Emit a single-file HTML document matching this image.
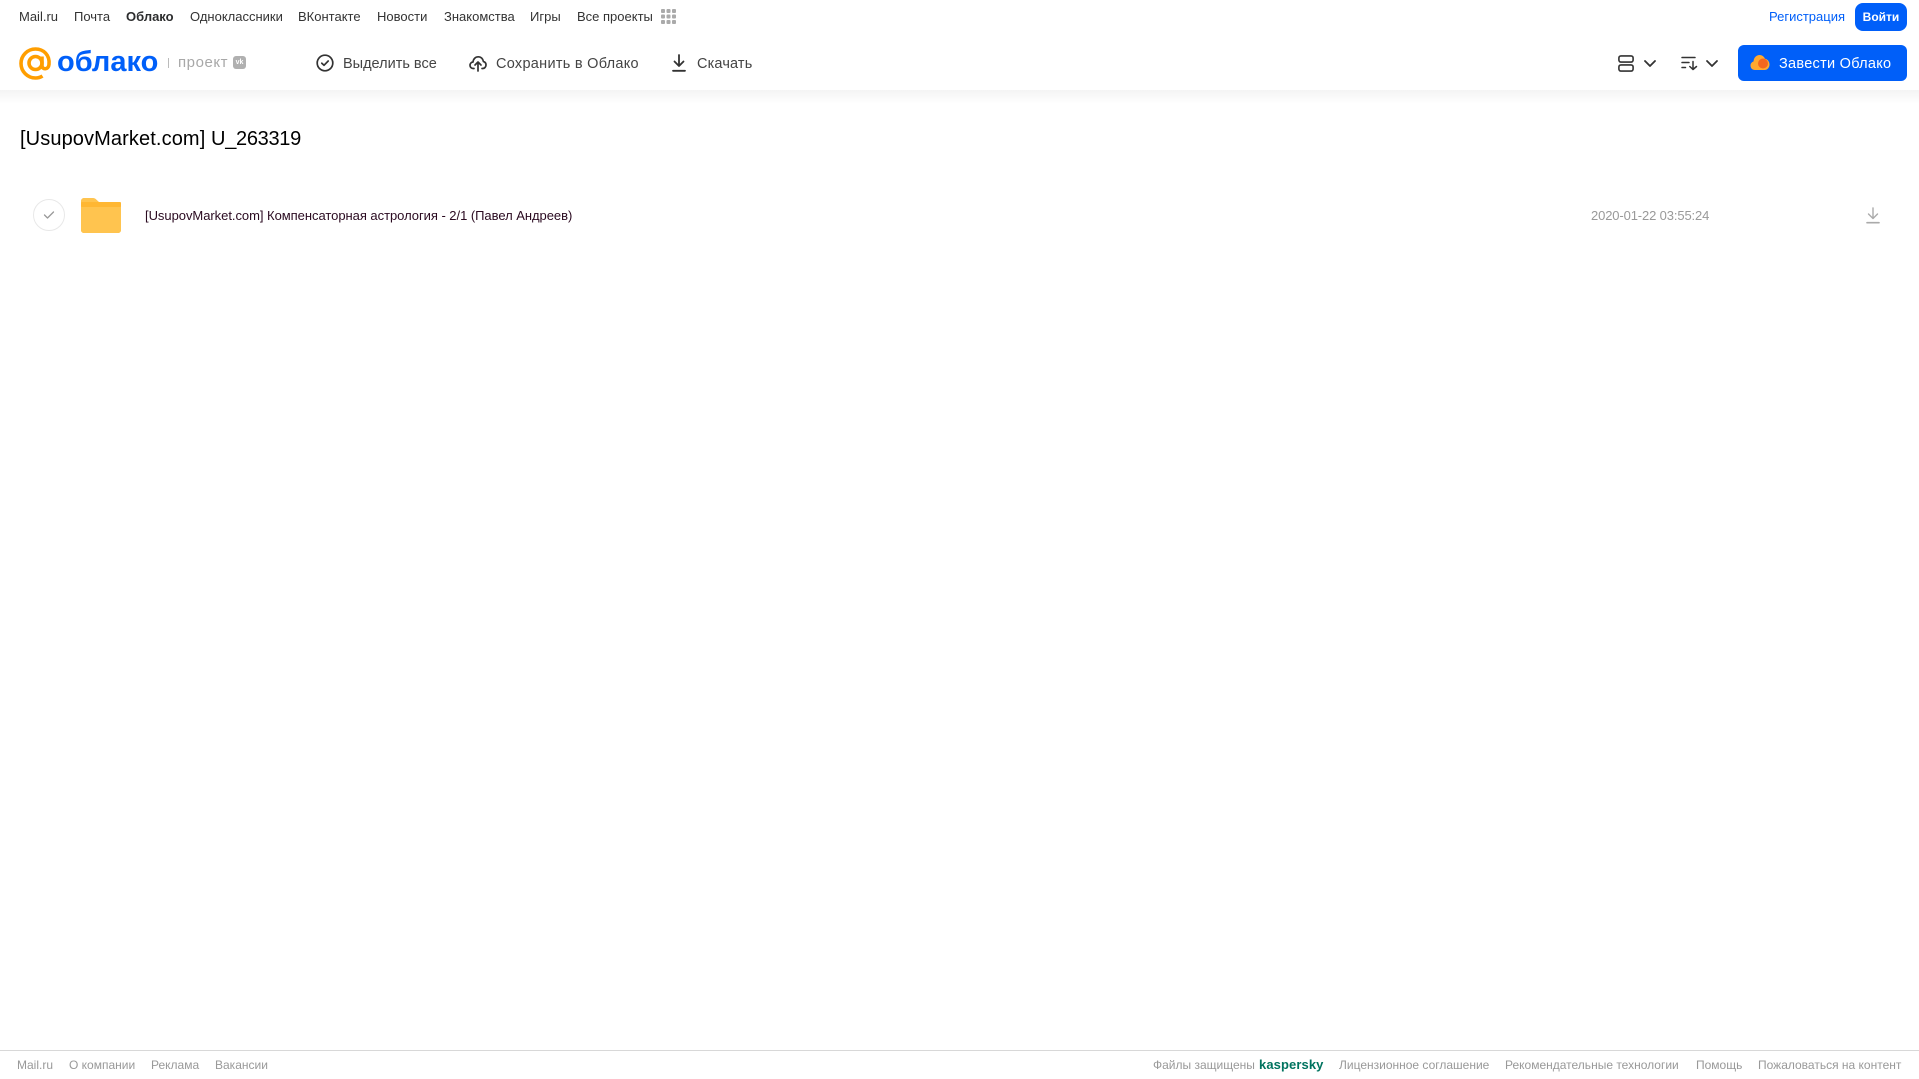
<!DOCTYPE html>
<html lang="ru"><head><meta charset="utf-8"><title>Облако</title>
<style>
html,body{margin:0;padding:0;background:#fff;width:1919px;height:1079px;overflow:hidden}
body{position:relative;font-family:"Liberation Sans",Arial,sans-serif;color:#333}
.t{position:absolute;white-space:nowrap;display:block}
.n{font-size:13px;line-height:16px;top:9px;color:#333}
.b{font-size:14.5px;line-height:20px;top:54px;color:#444}
.f{font-size:12px;line-height:16px;top:1057px;color:#999}
svg{position:absolute;overflow:visible}
</style></head><body>
<div style="position:absolute;left:0;top:90px;width:1919px;height:14px;background:linear-gradient(#f4f4f4,#fff)"></div>

<span class="t n" style="left:19px">Mail.ru</span>
<span class="t n" style="left:74px">Почта</span>
<span class="t n" style="left:126px;font-weight:bold;color:#2c2d2e">Облако</span>
<span class="t n" style="left:190px">Одноклассники</span>
<span class="t n" style="left:298px">ВКонтакте</span>
<span class="t n" style="left:377px">Новости</span>
<span class="t n" style="left:444px">Знакомства</span>
<span class="t n" style="left:530px">Игры</span>
<span class="t n" style="left:577px">Все проекты</span>
<svg style="left:661px;top:9px" width="15" height="15" fill="#aaa"><rect width="4" height="4" rx="1"/><rect x="5.5" width="4" height="4" rx="1"/><rect x="11" width="4" height="4" rx="1"/><rect y="5.5" width="4" height="4" rx="1"/><rect x="5.5" y="5.5" width="4" height="4" rx="1"/><rect x="11" y="5.5" width="4" height="4" rx="1"/><rect y="11" width="4" height="4" rx="1"/><rect x="5.5" y="11" width="4" height="4" rx="1"/><rect x="11" y="11" width="4" height="4" rx="1"/></svg>

<span class="t n" style="left:1769px;color:#005ff9">Регистрация</span>
<div style="position:absolute;left:1855px;top:3px;width:52px;height:28px;border-radius:8px;background:#005ff9;color:#fff;font-size:12px;font-weight:bold;line-height:28px;text-align:center">Войти</div>

<svg style="left:19px;top:47px" width="33" height="33" viewBox="0 0 33 33" fill="none" stroke="#ff9e00" stroke-width="3.6"><circle cx="16.5" cy="16" r="6.5"/><path d="M23 9.500V18.500C23 23 29.500 23 30 17.500C31 8 24.500 2 16.500 2C8.500 2 2 8.500 2 16.500C2 24.500 8.500 31 16.500 31C19.500 31 21.500 30.300 23.500 29"/></svg>
<span class="t" style="left:57px;top:42px;font-size:29px;line-height:40px;font-weight:bold;color:#005ff9">облако</span>
<div style="position:absolute;left:168px;top:58px;width:1px;height:10px;background:#bbb"></div>
<span class="t" style="left:178px;top:54px;font-size:15px;line-height:18px;color:#a8a8a8;letter-spacing:.55px">проект</span>
<div style="position:absolute;left:233px;top:56px;width:13px;height:13px;border-radius:3px;background:#b0b0b0;color:#fff;font-size:7px;font-weight:bold;line-height:13px;text-align:center">vk</div>

<svg style="left:316px;top:54px" width="18" height="18" viewBox="0 0 18 18" fill="none" stroke="#333" stroke-width="1.700" stroke-linecap="round" stroke-linejoin="round"><circle cx="9" cy="9" r="7.800"/><path d="M5.800 9.200L8 11.300L12.200 7"/></svg>
<span class="t b" style="left:343px">Выделить все</span>
<svg style="left:469px;top:54px" width="18" height="18" viewBox="0 0 18 18" fill="none" stroke="#333" stroke-width="1.700" stroke-linecap="round" stroke-linejoin="round"><path d="M5 14.500H4.200C2.300 14.500 1 13.100 1 11.300C1 9.500 2.300 8.200 4 8C4.300 4.800 6.500 2.800 9.300 2.800C12 2.800 14 4.800 14.400 7.500C16 7.900 17 9.300 17 11C17 13 15.500 14.500 13.700 14.500H13"/><path d="M9 17V8.500M6 11L9 8L12 11"/></svg>
<span class="t b" style="left:496px;letter-spacing:.28px">Сохранить в Облако</span>
<svg style="left:672px;top:54px" width="14" height="18" viewBox="0 0 14 18" fill="none" stroke="#333" stroke-width="1.800" stroke-linecap="round" stroke-linejoin="round"><path d="M7 1V12M2.500 7.500L7 12L11.500 7.500M1 16.800H13"/></svg>
<span class="t b" style="left:697px;letter-spacing:.15px">Скачать</span>

<svg style="left:1618px;top:55px" width="16" height="17" viewBox="0 0 16 17" fill="none" stroke="#333" stroke-width="1.600"><rect x=".9" y=".9" width="14.200" height="6.200" rx="2"/><rect x=".9" y="9.900" width="14.200" height="6.200" rx="2"/></svg>
<svg style="left:1644px;top:60px" width="12" height="7" viewBox="0 0 12 7" fill="none" stroke="#333" stroke-width="1.800" stroke-linecap="round" stroke-linejoin="round"><path d="M1 1L6 6L11 1"/></svg>
<svg style="left:1681px;top:56px" width="17" height="15" viewBox="0 0 17 15" fill="none" stroke="#333" stroke-width="1.500" stroke-linecap="round" stroke-linejoin="round"><path d="M1 1.500H14M1 6.500H8M1 11.500H4.500M12 5.500V13.500M8.800 10.500L12 13.500L15.500 10.500"/></svg>
<svg style="left:1706px;top:60px" width="12" height="7" viewBox="0 0 12 7" fill="none" stroke="#333" stroke-width="1.800" stroke-linecap="round" stroke-linejoin="round"><path d="M1 1L6 6L11 1"/></svg>

<div style="position:absolute;left:1738px;top:45px;width:169px;height:36px;border-radius:6px;background:#005ff9"></div>
<svg style="left:1750px;top:54px" width="20" height="17" viewBox="0 0 20 17"><path d="M5 16C2.200 16 .5 14 .5 11.500C.5 9.500 1.800 8 3.500 7.500C3.800 3.500 6.500 1 9.500 1C12 1 14 2.500 15 4.800C17.500 5.300 19.500 7.500 19.500 10.500C19.500 13.500 17.500 16 14.500 16Z" fill="#ffa930"/><circle cx="13" cy="9.500" r="5" fill="#f4671f"/></svg>
<span class="t" style="left:1779px;top:54px;font-size:14.500px;line-height:20px;color:#fff;letter-spacing:.28px">Завести Облако</span>

<span class="t" style="left:20px;top:127px;font-size:20px;line-height:24px;color:#000"><span style="letter-spacing:.11px">[UsupovMarket.com] </span><span style="letter-spacing:-.3px">U_263319</span></span>

<div style="position:absolute;left:33px;top:199px;width:30px;height:30px;border:1px solid #e8e8e8;border-radius:50%"></div>
<svg style="left:43px;top:210px" width="12" height="10" viewBox="0 0 12 10" fill="none" stroke="#999" stroke-width="1.300" stroke-linecap="round" stroke-linejoin="round"><path d="M1.500 5L4.500 8L10.500 2"/></svg>
<svg style="left:81px;top:198px" width="40" height="35" viewBox="0 0 40 35"><path d="M0 3C0 1.300 1.300 0 3 0H12C13.500 0 14.500 .7 15.500 1.700L18 4H37C38.700 4 40 5.300 40 7V32C40 33.700 38.700 35 37 35H3C1.300 35 0 33.700 0 32Z" fill="#ffc44f"/><rect y="4" x="0" width="40" height="5" rx="1" fill="#ffb733"/><path d="M0 9H40V32C40 33.700 38.700 35 37 35H3C1.300 35 0 33.700 0 32Z" fill="#ffc44f"/></svg>
<span class="t" style="left:145px;top:208px;font-size:13px;line-height:16px;color:#2a0a20;letter-spacing:-.04px">[UsupovMarket.com] Компенсаторная астрология - 2/1 (Павел Андреев)</span>
<span class="t" style="left:1591px;top:208px;font-size:13px;line-height:16px;color:#999;letter-spacing:-.13px">2020-01-22 03:55:24</span>
<svg style="left:1866px;top:207px" width="14" height="17" viewBox="0 0 14 17" fill="none" stroke="#aaa" stroke-width="1.400" stroke-linecap="round" stroke-linejoin="round"><path d="M7 1V11.500M2.500 7L7 11.500L11.500 7"/><path d="M1 15.700H13" stroke-width="1.600"/></svg>

<div style="position:absolute;left:0;top:1050px;width:1919px;height:1px;background:#d8d8d8"></div>
<span class="t f" style="left:17px">Mail.ru</span>
<span class="t f" style="left:69px">О компании</span>
<span class="t f" style="left:151px">Реклама</span>
<span class="t f" style="left:215px">Вакансии</span>
<span class="t f" style="left:1153px">Файлы защищены</span>
<span class="t f" style="left:1259px;color:#00735f;font-weight:bold;font-size:13px;letter-spacing:.1px">kaspersky</span>
<span class="t f" style="left:1339px">Лицензионное соглашение</span>
<span class="t f" style="left:1505px">Рекомендательные технологии</span>
<span class="t f" style="left:1696px">Помощь</span>
<span class="t f" style="left:1758px">Пожаловаться на контент</span>
</body></html>
